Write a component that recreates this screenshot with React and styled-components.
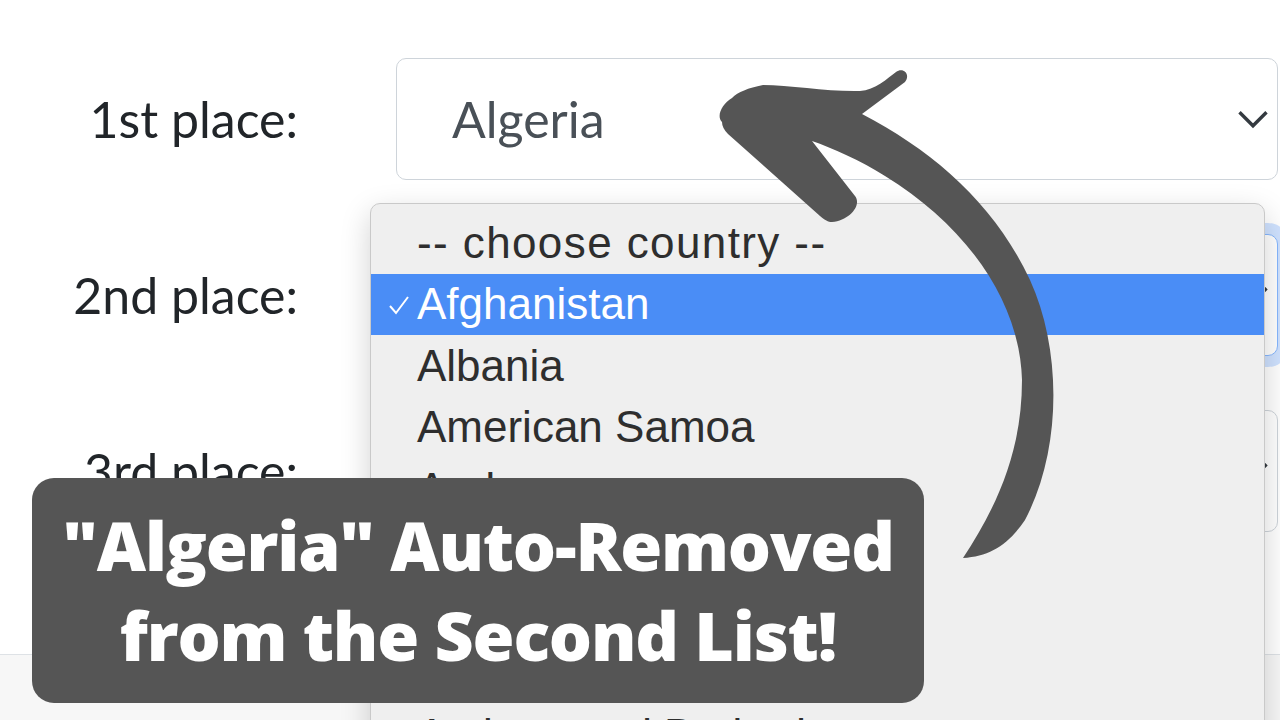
import React from "react";
import styled, { createGlobalStyle } from "styled-components";

const GlobalStyle = createGlobalStyle`
  html, body {
    margin: 0;
    padding: 0;
    background: #fff;
  }
  body {
    font-family: Lato, "Liberation Sans", sans-serif;
  }
`;

const Page = styled.div`
  position: relative;
  width: 1280px;
  height: 720px;
  overflow: hidden;
  display: flex;
  flex-direction: column;
`;

const Form = styled.div`
  display: grid;
  grid-template-columns: 298px 882px;
  column-gap: 98px;
  row-gap: 54px;
  padding-top: 58px;
  align-items: center;
`;

const Label = styled.label`
  justify-self: end;
  font-size: 50px;
  color: #212529;
`;

const SelectBox = styled.div`
  height: 122px;
  box-sizing: border-box;
  display: flex;
  align-items: center;
  justify-content: space-between;
  padding: 0 6px 0 55px;
  border: 1.5px solid ${({ $focused }) => ($focused ? "#86b7fe" : "#ced4da")};
  border-radius: 10px;
  box-shadow: ${({ $focused }) =>
    $focused ? "0 0 0 11px rgba(13, 110, 253, 0.2)" : "none"};
  font-size: 50px;
  color: #495057;
  background: #fff;
`;

const Footer = styled.footer`
  margin-top: auto;
  height: 65px;
  background: #f7f7f7;
  border-top: 1px solid #dee2e6;
`;

const Dropdown = styled.ul`
  position: absolute;
  left: 370px;
  top: 203px;
  width: 895px;
  height: 580px;
  box-sizing: border-box;
  margin: 0;
  padding: 8px 0 0;
  list-style: none;
  background: #efefef;
  border: 1px solid #c9c9c9;
  border-radius: 10px;
  box-shadow: 0 10px 30px rgba(0, 0, 0, 0.18);
  font-family: "Liberation Sans", Arial, sans-serif;
  font-size: 44px;
  color: #2e2e2e;
`;

const Option = styled.li`
  position: relative;
  height: 61.5px;
  display: flex;
  align-items: center;
  padding-left: 46px;
  letter-spacing: ${({ $placeholder }) => ($placeholder ? "1.4px" : "normal")};
  background: ${({ $selected }) => ($selected ? "#4a8df6" : "transparent")};
  color: ${({ $selected }) => ($selected ? "#fff" : "inherit")};
`;

const Check = styled.svg`
  position: absolute;
  left: 17px;
  top: 21px;
`;

const Arrow = styled.svg`
  position: absolute;
  left: 0;
  top: 0;
  pointer-events: none;
`;

const Banner = styled.div`
  position: absolute;
  left: 32px;
  top: 478px;
  width: 892px;
  height: 225px;
  box-sizing: border-box;
  padding-top: 22px;
  background: #555555;
  border-radius: 22px;
  color: #fff;
  font-family: "Open Sans", sans-serif;
  font-weight: 800;
  font-size: 68px;
  letter-spacing: -1.2px;
  line-height: 90px;
  text-align: center;
`;

const BannerLine = styled.div`
  white-space: nowrap;
`;

const Chevron = () => (
  <svg width="36" height="36" viewBox="0 0 16 16">
    <path d="m2 5 6 6 6-6" fill="none" stroke="#343a40" strokeWidth="1.5" />
  </svg>
);

const places = [
  { label: "1st place:", value: "Algeria" },
  { label: "2nd place:", value: "-- choose country --", focused: true },
  { label: "3rd place:", value: "-- choose country --" },
];

const countries = [
  "-- choose country --",
  "Afghanistan",
  "Albania",
  "American Samoa",
  "Andorra",
  "Angola",
  "Anguilla",
  "Antarctica",
  "Antigua and Barbuda",
];

const App = () => (
  <Page>
    <GlobalStyle />
    <Form>
      {places.map((p) => (
        <React.Fragment key={p.label}>
          <Label>{p.label}</Label>
          <SelectBox $focused={p.focused}>
            <span>{p.value}</span>
            <Chevron />
          </SelectBox>
        </React.Fragment>
      ))}
    </Form>
    <Footer />

    <Dropdown>
      {countries.map((c, i) => (
        <Option key={c} $selected={c === "Afghanistan"} $placeholder={i === 0}>
          {c === "Afghanistan" && (
            <Check width="22" height="20" viewBox="0 0 22 20">
              <path d="M2 11 L8 18 L20 2" fill="none" stroke="#fff" strokeWidth="2" />
            </Check>
          )}
          {c}
        </Option>
      ))}
    </Dropdown>

    <Arrow width="1280" height="720" viewBox="0 0 1280 720">
      <path
        fill="#555555"
        d="M722 122 C716 116 722 104 732 98 C738 92 748 88 763 85 C790 85 830 92 860 91 C875 90 888 78 896 72 C903 67 911 74 905 82 L862 114 C935 152 995 205 1030 280 C1062 350 1062 450 1025 520 C1008 545 990 556 963 558 C998 505 1022 450 1022 380 C1020 300 965 225 885 176 C860 160 832 148 812 141 L855 196 C862 205 850 220 832 222 C828 222 825 220 820 216 L728 134 C724 130 722 126 722 122 Z"
      />
    </Arrow>

    <Banner>
      <BannerLine>"Algeria" Auto-Removed</BannerLine>
      <BannerLine>from the Second List!</BannerLine>
    </Banner>
  </Page>
);

export default App;
